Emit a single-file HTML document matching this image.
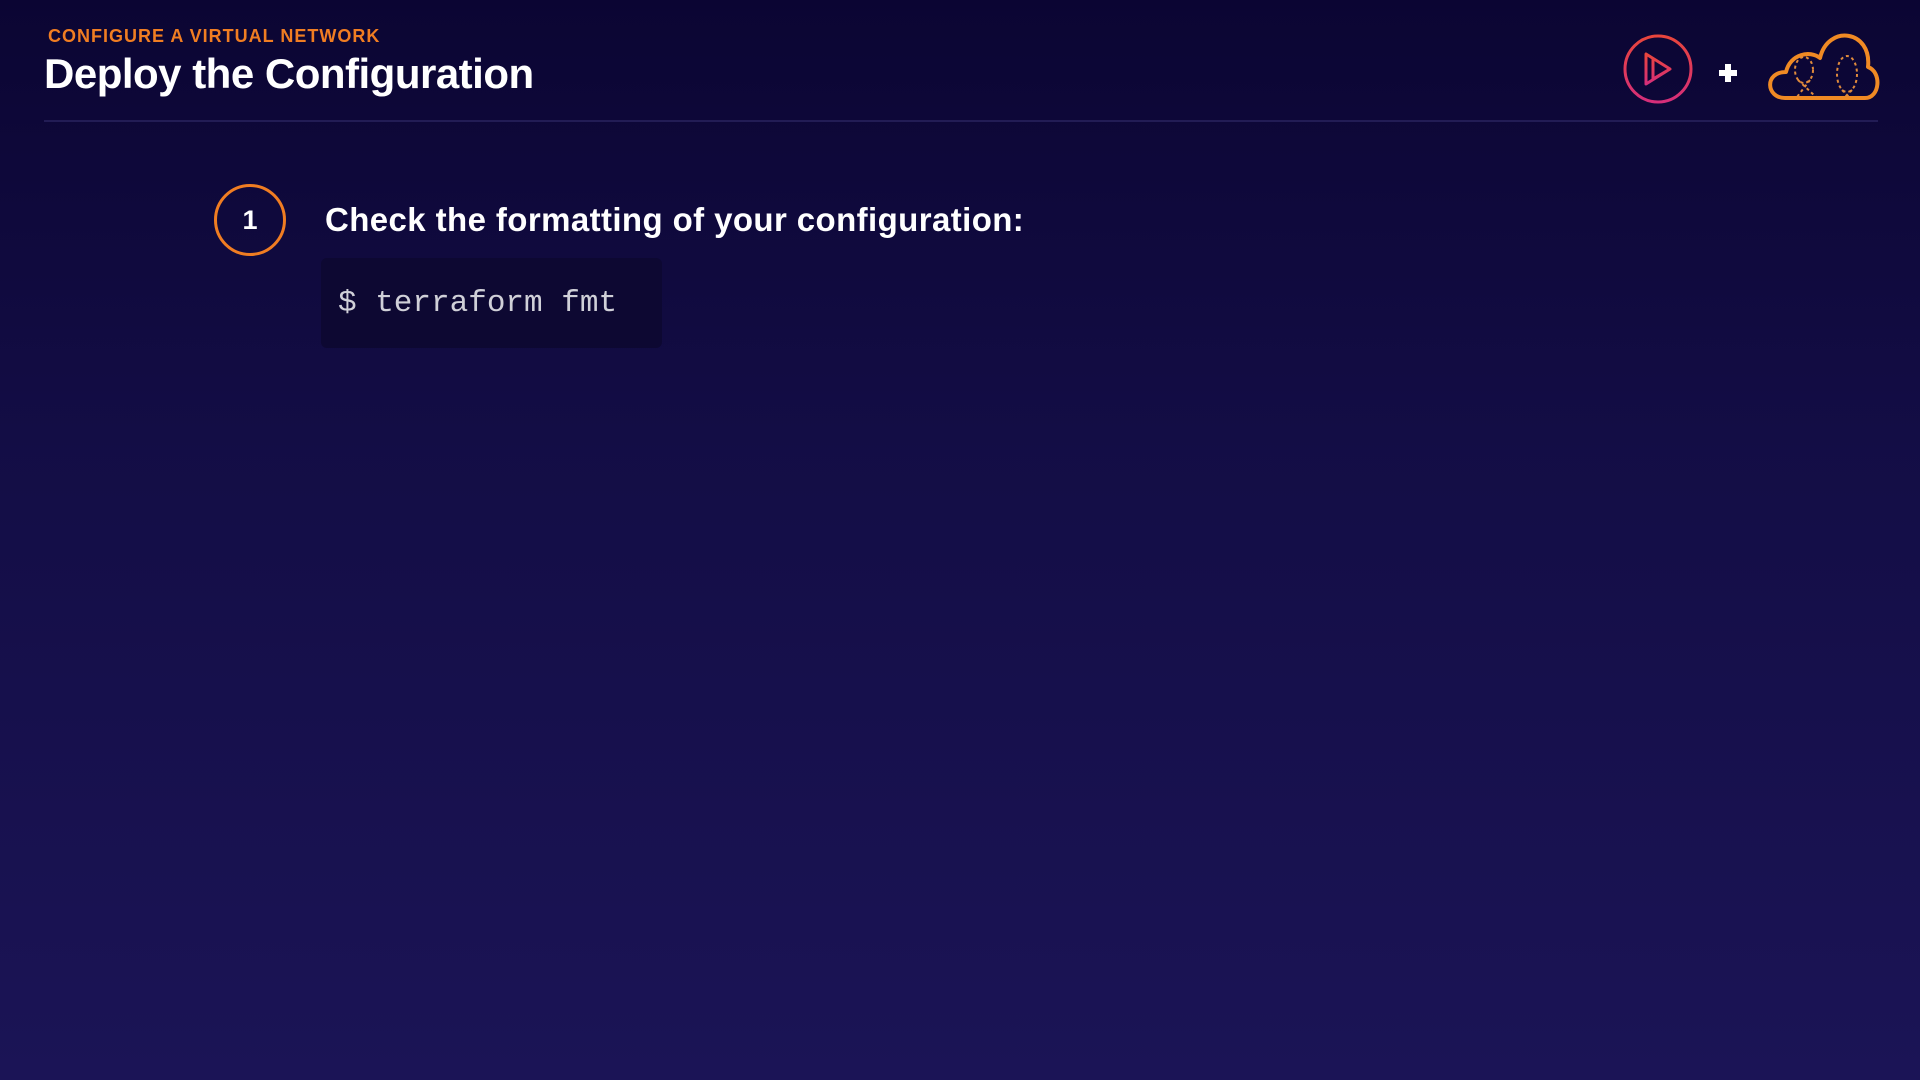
<!DOCTYPE html>
<html><head><meta charset="utf-8"><style>
html,body{margin:0;padding:0}
body{width:1920px;height:1080px;overflow:hidden;position:relative;background:linear-gradient(180deg,#0b0533 0%,#130d45 40%,#1b1456 100%);font-family:"Liberation Sans",sans-serif}
.sub{position:absolute;left:48px;top:26px;color:#f07d22;font-weight:bold;font-size:18px;letter-spacing:1px}
.title{position:absolute;left:44px;top:50px;color:#fff;font-weight:bold;font-size:42px;letter-spacing:-0.5px}
.line{position:absolute;left:44px;top:120px;width:1834px;height:2px;background:#221c55}
.num{position:absolute;left:214px;top:184px;width:72px;height:72px;border:3px solid #f07d22;border-radius:50%;box-sizing:border-box;color:#fff;font-weight:bold;font-size:27px;text-align:center;line-height:66px}
.step{position:absolute;left:325px;top:201px;color:#fff;font-weight:bold;font-size:33px;letter-spacing:0.4px}
.code{position:absolute;left:321px;top:258px;width:341px;height:90px;background:#0d0832;border-radius:6px}
.code span{position:absolute;left:17px;top:28px;color:#d0d0d8;font-family:"Liberation Mono",monospace;font-size:31px}
</style></head><body>
<div class="sub">CONFIGURE A VIRTUAL NETWORK</div>
<div class="title">Deploy the Configuration</div>
<div class="line"></div>
<svg style="position:absolute;left:1620px;top:28px" width="270" height="84" viewBox="0 -2 270 84">
<defs><linearGradient id="g" x1="0" y1="0" x2="0" y2="1"><stop offset="0" stop-color="#e8453c"/><stop offset="1" stop-color="#d62e7a"/></linearGradient></defs>
<circle cx="38" cy="39" r="33" fill="none" stroke="url(#g)" stroke-width="3"/>
<path d="M26 24 L26 54 L50 39 Z M33 29 L33 49 L50 39" fill="none" stroke="url(#g)" stroke-width="3" stroke-linejoin="round"/>
<path d="M108 34 v18 M99 43 h18" stroke="#fff" stroke-width="6"/>
<path d="M165 68 C146 68 144 42 166 42 C170 24 190 20 200 28 C208 -6 252 0 248 37 C262 42 260 68 245 68 Z" fill="none" stroke="#f08a24" stroke-width="4" stroke-linejoin="round"/>
<g fill="none" stroke="#e08a3c" stroke-width="2" stroke-dasharray="3 3">
<ellipse cx="184" cy="40" rx="9" ry="13"/><path d="M178 50 L196 67 M190 50 L177 67"/>
<ellipse cx="227" cy="44" rx="10" ry="18"/><path d="M222 60 L230 68 M232 60 L224 68"/>
</g>
</svg>
<div class="num">1</div>
<div class="step">Check the formatting of your configuration:</div>
<div class="code"><span>$ terraform fmt</span></div>
</body></html>
